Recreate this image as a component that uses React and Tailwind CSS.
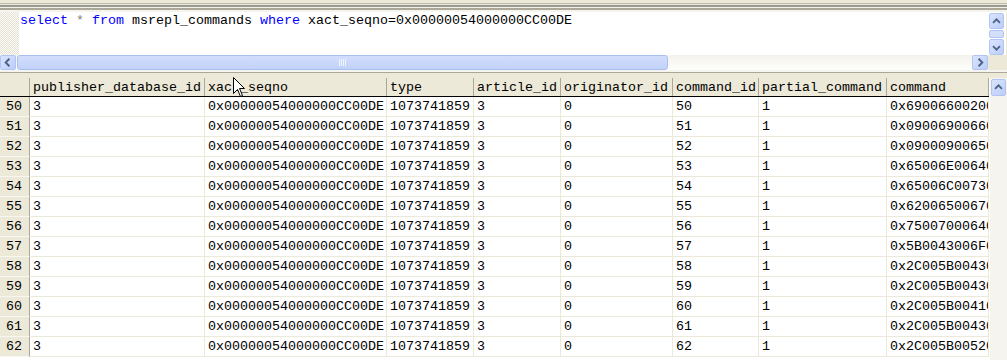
import React from 'react';

const columns = [
  { name: 'publisher_database_id', w: 'w-[175px]' },
  { name: 'xact_seqno', w: 'w-[182px]' },
  { name: 'type', w: 'w-[87px]' },
  { name: 'article_id', w: 'w-[87px]' },
  { name: 'originator_id', w: 'w-[112px]' },
  { name: 'command_id', w: 'w-[86px]' },
  { name: 'partial_command', w: 'w-[128px]' },
  { name: 'command', w: 'w-[102px]' },
];

const commands = {
  50: '0x6900660020006E',
  51: '0x0900690066006E',
  52: '0x0900090065006E',
  53: '0x65006E0064000D',
  54: '0x65006C0073000D',
  55: '0x620065006700',
  56: '0x75007000640061',
  57: '0x5B0043006F006E',
  58: '0x2C005B00430061',
  59: '0x2C005B00430068',
  60: '0x2C005B00410064',
  61: '0x2C005B0043006F',
  62: '0x2C005B00520065',
};

const rows = Array.from({ length: 13 }, (_, i) => {
  const id = 50 + i;
  return {
    id,
    cells: ['3', '0x00000054000000CC00DE', '1073741859', '3', '0', String(id), '1', commands[id]],
  };
});

function ArrowBtn({ dir, className = '' }) {
  const paths = {
    up: 'M3.5 9 L7.5 5 L11.5 9',
    down: 'M3.5 6 L7.5 10 L11.5 6',
    left: 'M9 3.5 L5 7.5 L9 11.5',
    right: 'M6 3.5 L10 7.5 L6 11.5',
  };
  return (
    <div
      className={`flex items-center justify-center rounded-[2px] border border-[#b2c5f2] bg-[linear-gradient(135deg,#d9e4fd,#bccdf8)] ${className}`}
    >
      <svg width="15" height="15" viewBox="0 0 15 15">
        <path d={paths[dir]} fill="none" stroke="#4d6185" strokeWidth="2" />
      </svg>
    </div>
  );
}

export default function App() {
  const mono = "font-['Liberation_Mono','Courier_New',monospace] text-[13.33px] leading-[15px]";

  return (
    <div className={`relative w-[1007px] h-[360px] overflow-hidden bg-[#ece9d8] ${mono} text-black`}>
      {/* splitter lines at the top */}
      <div className="h-[3px] bg-[#ece9d8]" />
      <div className="h-px bg-[#c0bdb0]" />
      <div className="h-px bg-[#e8e6dc]" />
      <div className="h-[2px] bg-[#9d9b90]" />
      <div className="h-px bg-[#f0efe8]" />
      <div className="h-[2px] bg-[#aca899]" />
      <div className="h-[2px] bg-[#f5f4ee]" />

      {/* query editor */}
      <div className="flex h-[43px]">
        <div className="w-[19px] bg-[#f3f2ea] [background-image:repeating-conic-gradient(#e6e3d4_0_25%,#fbfbf7_0_50%)] [background-size:2px_2px]" />
        <div className="flex-1 bg-white pt-px pl-px whitespace-pre">
          <span className="text-[#0000ff]">select</span>{' '}
          <span className="text-[#808080]">*</span>{' '}
          <span className="text-[#0000ff]">from</span> msrepl_commands{' '}
          <span className="text-[#0000ff]">where</span> xact_seqno=0x00000054000000CC00DE
        </div>
        <div className="w-[17px] bg-white flex flex-col pt-px">
          <ArrowBtn dir="up" className="h-[16px] w-[15px]" />
          <div className="h-[8px] w-[15px] my-px rounded-[2px] border border-[#b2c5f2] bg-[#d3defb]" />
          <ArrowBtn dir="down" className="h-[16px] w-[15px]" />
        </div>
        <div className="w-px bg-[#ece9d8]" />
      </div>

      {/* horizontal scrollbar */}
      <div className="flex h-[15px]">
        <div className="flex flex-1 bg-[linear-gradient(#f3f2ec,#fefefb)]">
          <ArrowBtn dir="left" className="h-[15px] w-[16px]" />
          <div className="ml-px w-[651px] h-[15px] rounded-[3px] border border-[#a8bff0] bg-[linear-gradient(#d2ddfb,#c1d2f9)] flex items-center justify-center">
            <div className="flex gap-px">
              <div className="w-px h-[7px] bg-[#eef3fe]" />
              <div className="w-px h-[7px] bg-[#eef3fe]" />
              <div className="w-px h-[7px] bg-[#eef3fe]" />
              <div className="w-px h-[7px] bg-[#eef3fe]" />
            </div>
          </div>
          <div className="flex-1" />
          <ArrowBtn dir="right" className="h-[15px] w-[16px]" />
        </div>
        <div className="w-[19px] bg-[#ece9d8]" />
      </div>

      {/* splitter between editor and grid */}
      <div className="h-[2px] bg-[#f5f4ee]" />
      <div className="h-px bg-[#aca899]" />
      <div className="h-[5px] bg-[#ece9d8]" />

      {/* results grid */}
      <div className="flex">
        <div className="w-[989px] overflow-hidden bg-white">
          <div className="flex h-[19px] border-b border-black bg-[#ece9d8]">
            <div className="w-[30px] shrink-0 border-r border-[#aca899]" />
            {columns.map((c) => (
              <div
                key={c.name}
                className={`${c.w} shrink-0 border-r border-[#aca899] pl-[3px] flex items-center whitespace-nowrap overflow-hidden`}
              >
                {c.name}
              </div>
            ))}
          </div>
          {rows.map((r) => (
            <div key={r.id} className="flex h-[20px]">
              <div className="w-[30px] shrink-0 bg-[#ece9d8] border-r border-[#aca899] border-b border-b-[#f7f6f1] pl-[6px] flex items-center">
                {r.id}
              </div>
              {r.cells.map((v, i) => (
                <div
                  key={i}
                  className={`${columns[i].w} shrink-0 border-r border-b border-[#ece9d8] pl-[3px] flex items-center whitespace-nowrap overflow-hidden`}
                >
                  {v}
                </div>
              ))}
            </div>
          ))}
        </div>
        <div className="w-[18px] h-[282px] border-l border-[#fdfdfb] bg-[#f5f4ee] pt-px pl-px">
          <ArrowBtn dir="up" className="h-[17px] w-[15px]" />
        </div>
      </div>

      {/* mouse pointer */}
      <svg className="absolute left-[233px] top-[77px]" width="13" height="21" viewBox="0 0 13 21">
        <path
          d="M0.5 0.5 L0.5 16.5 L4.5 12.5 L7.5 19.5 L9.5 18.5 L6.5 11.5 L11.5 11.5 Z"
          fill="#fff"
          stroke="#000"
          strokeWidth="1"
        />
      </svg>
    </div>
  );
}
